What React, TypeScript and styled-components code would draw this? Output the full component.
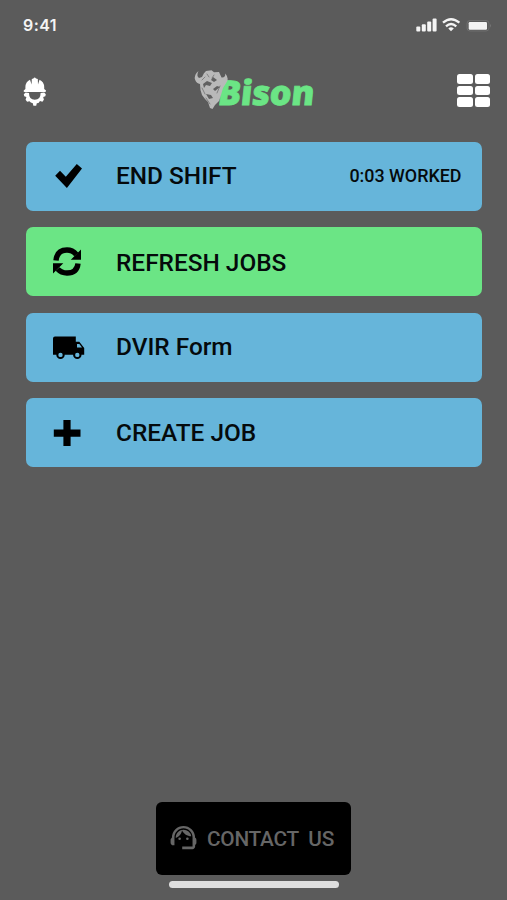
import React from "react";
import styled, { createGlobalStyle } from "styled-components";
import { MdSupportAgent } from "react-icons/md";

const GlobalStyle = createGlobalStyle`
  * { box-sizing: border-box; }
  body { margin: 0; background: #5b5b5b; }
  button { font: inherit; border: 0; padding: 0; margin: 0; background: none; color: inherit; }
  svg { display: block; flex: none; }
`;

const Screen = styled.main`
  width: 507px;
  height: 900px;
  display: flex;
  flex-direction: column;
  overflow: hidden;
  background: #5b5b5b;
  font-family: Roboto, sans-serif;
`;

const StatusBar = styled.div`
  height: 49px;
  padding: 0 16px 0 23px;
  display: flex;
  align-items: center;
  justify-content: space-between;
  color: #f4f4f4;
`;

const Clock = styled.span`
  font: 600 16px/20px Inter, sans-serif;
  letter-spacing: 0.4px;
`;

const Header = styled.header`
  height: 92.5px;
  padding: 20px 17px 0 22px;
  display: flex;
  align-items: flex-start;
  justify-content: space-between;
`;

const HatButton = styled.button`
  padding-top: 7px;
`;

const Logo = styled.div`
  margin-left: 7px;
`;

const MenuGrid = styled.button`
  display: grid;
  grid-template-columns: repeat(2, 15.5px);
  grid-auto-rows: 9.5px;
  gap: 2px;
  margin-top: 5px;
`;

const MenuCell = styled.span`
  background: #fff;
  border-radius: 2.5px;
`;

const Actions = styled.div`
  padding: 0 25px 0 26px;
  display: flex;
  flex-direction: column;
  gap: 16.5px;
`;

const ActionButton = styled.button<{ $tone?: "green" | "blue" }>`
  height: 69px;
  padding: 0 20.5px 0 24px;
  display: flex;
  align-items: center;
  border-radius: 7px;
  background: ${(p) => (p.$tone === "green" ? "#6be585" : "#66b5da")};
  color: #050a0c;
  text-align: left;
`;

const IconSlot = styled.span`
  width: 66px;
  display: flex;
`;

const Label = styled.span<{ $drop?: number }>`
  flex: 1;
  padding-top: ${(p) => p.$drop ?? 0}px;
  font-size: 24.4px;
  line-height: 28px;
  font-weight: 500;
  white-space: nowrap;
`;

const Worked = styled.span`
  font-size: 17.9px;
  line-height: 22px;
  font-weight: 500;
  white-space: nowrap;
`;

const Footer = styled.footer`
  margin-top: auto;
  height: 98px;
  display: flex;
  flex-direction: column;
  align-items: center;
  gap: 6px;
`;

const ContactButton = styled.button`
  width: 195px;
  height: 73px;
  padding: 0 0 2px 12px;
  display: flex;
  align-items: center;
  gap: 8px;
  border-radius: 6px;
  background: #000;
  color: #666;
`;

const ContactLabel = styled.span`
  font-size: 20.8px;
  line-height: 28px;
  padding-top: 2px;
  font-weight: 500;
  letter-spacing: -0.25px;
  white-space: pre;
`;

const HomeIndicator = styled.div`
  width: 170px;
  height: 6.5px;
  border-radius: 4px;
  background: #dedede;
`;

const StatusIcons = () => (
  <svg width="76" height="18" viewBox="415 15.5 76 18" fill="currentColor">
    <rect x="416.3" y="26" width="4" height="5" rx="1" />
    <rect x="421.8" y="23.8" width="4" height="7.2" rx="1" />
    <rect x="427.2" y="21" width="4" height="10" rx="1" />
    <rect x="432.6" y="18" width="4" height="13" rx="1" />
    <g fill="none" stroke="currentColor" strokeWidth="2.3">
      <path d="M443 22.2Q451 15.2 459.4 22.2" />
      <path d="M446 25.8Q451 21.3 456.3 25.8" />
    </g>
    <path d="M448.3 28Q451 25.7 453.8 28L451 30.8Z" />
    <rect x="467" y="20" width="22" height="10.5" rx="3" fill="none" stroke="#777" strokeWidth="0.7" />
    <rect x="468.7" y="21.5" width="18.3" height="7.8" rx="1.2" />
    <path d="M490 23.5q1.2 1.7 0 3.4z" fill="#888" />
  </svg>
);

const HatIcon = () => (
  <svg width="26" height="32" viewBox="22 76 26 32">
    <g fill="#fff">
      <path d="M25.4 89V87Q25.6 81.8 30 79.8L31.6 84.6L31.8 79L33.4 78.4Q34.6 76.7 36 78.4L37.8 79L38 84.6L39.5 79.8Q44 81.8 44.2 87V89L46 90.5Q46.2 92 44.8 92H24.8Q23.3 92 23.7 90.5Z" />
      <path d="M25.6 92.6L29 93Q29 99.8 34.8 99.8Q40.6 99.8 40.6 93L44.2 92.6L45.8 94.2L45.3 96.2L43.2 97L43.9 99.8L42.4 101.7L40 101.1L38.5 103L36.8 103.3L36.2 105.8H33.4L32.8 103.3L30.8 102.6L29.5 101.2L27.1 101.7L25.6 99.8L26.4 97L24.3 96.2L23.8 94.2Z" />
    </g>
  </svg>
);

const BisonLogo = () => (
  <svg width="126" height="48" viewBox="193 69 126 48" overflow="visible">
    <text transform="translate(217 104.8) skewX(-6)" fill="#6be585" stroke="#6be585" strokeWidth="0.8" fontFamily="Open Sans, sans-serif" fontSize="34" fontWeight="800" textLength="96.5" lengthAdjust="spacingAndGlyphs">Bison</text>
    <path fill="#b9b9b9" d="M198.5 71Q193.5 75 195.2 80Q196.5 83.5 200 84L200.5 90L202 95L205 99L208 102L210 108L212.5 109L215 105L219 101L221 95L223 88L225.5 84Q230 79 225.3 73.5Q225.5 78 221.5 77.5L219 72L214 72.3L211.5 70.3L206 71L203.8 73.5L202 77L199 78Q196 76 198.5 71Z" />
    <g fill="none" stroke="#747474" strokeWidth="0.8" strokeLinecap="round">
      <path d="M202 80L205 77M207 74L209 77M214 75L212 78M202 88L205 94M220 86L217 93M206 98L210 104" />
    </g>
    <path fill="#616161" d="M203 84L207 81L212 83L210 86L206 85L204 88ZM213 89L217 86L220 87L215 91ZM206 94L211 95L213 98L209 99ZM213 77L217 80L214 82L211 80Z" />
  </svg>
);

const CheckIcon = () => (
  <svg width="32" height="28" viewBox="50 162 32 28">
    <path fill="#000" d="M60 170.8L65.8 176.8L76.8 164L82 168.5L66.9 188L55.2 175.8Z" />
  </svg>
);

const RefreshIcon = () => (
  <svg width="34" height="34" viewBox="50 244.5 34 34">
    <g fill="none" stroke="#000" strokeWidth="5.4">
      <path d="M56 260Q57 249.5 67 249.5Q72.5 249.5 76.3 254" />
      <path d="M78 263Q77 272.5 67 272.5Q61.3 272.5 57.6 268.5" />
    </g>
    <path d="M81 249V259.3H70.8ZM53 273V262.7H63.3Z" />
  </svg>
);

const TruckIcon = () => (
  <svg width="35" height="27" viewBox="50 333 35 27">
    <path d="M55 335.5H75.8V340.7H79.3L84.2 347V353.8H53V337.5Q53 335.5 55 335.5Z" />
    <path d="M77 343H79.4L82 346.4H77Z" fill="#66b5da" />
    <g fill="#66b5da" stroke="#000" strokeWidth="2">
      <circle cx="60.5" cy="353.9" r="3.2" />
      <circle cx="77.3" cy="353.9" r="3.2" />
    </g>
  </svg>
);

const PlusIcon = () => (
  <svg width="34" height="32" viewBox="50 417 34 32">
    <path d="M63.4 420H70.6V429.4H80.5V436.7H70.6V446H63.4V436.7H53.8V429.4H63.4Z" />
  </svg>
);

export default function App() {
  return (
    <>
      <GlobalStyle />
      <Screen>
        <StatusBar>
          <Clock>9:41</Clock>
          <StatusIcons />
        </StatusBar>
        <Header>
          <HatButton aria-label="Profile"><HatIcon /></HatButton>
          <Logo><BisonLogo /></Logo>
          <MenuGrid aria-label="Menu">
            {Array.from({ length: 6 }, (_, i) => <MenuCell key={i} />)}
          </MenuGrid>
        </Header>
        <Actions>
          <ActionButton>
            <IconSlot><CheckIcon /></IconSlot>
            <Label>END SHIFT</Label>
            <Worked>0:03 WORKED</Worked>
          </ActionButton>
          <ActionButton $tone="green">
            <IconSlot><RefreshIcon /></IconSlot>
            <Label $drop={3}>REFRESH JOBS</Label>
          </ActionButton>
          <ActionButton>
            <IconSlot><TruckIcon /></IconSlot>
            <Label>DVIR Form</Label>
          </ActionButton>
          <ActionButton>
            <IconSlot><PlusIcon /></IconSlot>
            <Label>CREATE JOB</Label>
          </ActionButton>
        </Actions>
        <Footer>
          <ContactButton>
            <MdSupportAgent size={31} />
            <ContactLabel>{"CONTACT  US"}</ContactLabel>
          </ContactButton>
          <HomeIndicator />
        </Footer>
      </Screen>
    </>
  );
}
